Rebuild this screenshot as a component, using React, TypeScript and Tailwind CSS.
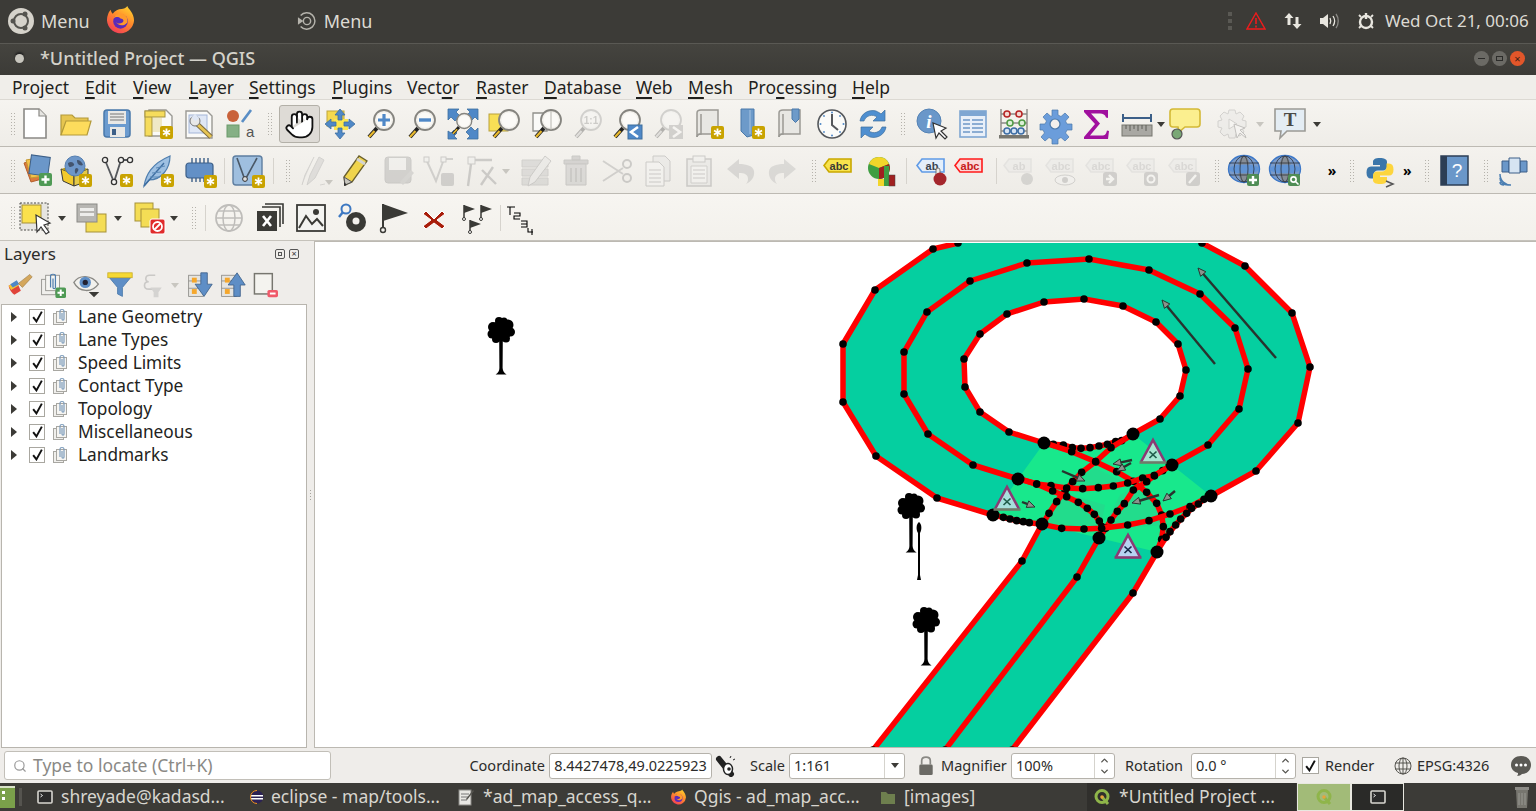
import type { ReactNode } from "react";
import { ChevronDown, ChevronUp, Hand, Search } from "lucide-react";

const FONT = "font-['Noto_Sans',sans-serif]";

function Ic({ children, off, className = "w-8 h-8" }: { children: ReactNode; off?: boolean; className?: string }) {
  return (
    <svg viewBox="0 0 32 32" className={`${className} overflow-visible ${off ? "opacity-30 grayscale" : ""}`}>
      {children}
    </svg>
  );
}

function Star({ x = 18, y = 18 }: { x?: number; y?: number }) {
  const c = 6.5;
  return (
    <g transform={`translate(${x} ${y})`}>
      <rect width="13" height="13" rx="2" fill="#c9a300" />
      <g stroke="#fff" strokeWidth="1.8">
        <line x1={c} y1="2.5" x2={c} y2="10.5" />
        <line x1="3" y1="4.5" x2="10" y2="8.5" />
        <line x1="3" y1="8.5" x2="10" y2="4.5" />
      </g>
    </g>
  );
}

function Mag({ x = 0, y = 0 }: { x?: number; y?: number }) {
  return (
    <g transform={`translate(${x} ${y})`}>
      <line x1="12" y1="20" x2="4" y2="29" stroke="#222" strokeWidth="4" />
      <line x1="9.5" y1="23" x2="4" y2="29" stroke="#e8b92e" strokeWidth="2.2" />
      <circle cx="19" cy="12" r="10" fill="#f3f1ec" stroke="#85847f" strokeWidth="1.8" />
      <circle cx="19" cy="12" r="7.5" fill="#fbfaf7" />
    </g>
  );
}

function Grip({ className = "" }: { className?: string }) {
  return (
    <div className={`grid w-[18px] shrink-0 justify-center ${className}`}>
      <div className="grid grid-cols-2 gap-x-[2px] gap-y-[2px]">
        {Array.from({ length: 16 }).map((_, i) => (
          <i key={i} className="h-px w-px bg-[#b5b2ab]" />
        ))}
      </div>
    </div>
  );
}

function Tool({ children, active, className = "" }: { children: ReactNode; active?: boolean; className?: string }) {
  return (
    <div
      className={`flex h-[38px] w-[41px] shrink-0 items-center justify-center rounded-[3px] ${
        active ? "border border-[#b3b0a8] bg-[#dedbd6]" : ""
      } ${className}`}
    >
      {children}
    </div>
  );
}

function Dd({ off, className = "" }: { off?: boolean; className?: string }) {
  return (
    <div className={`flex w-[9px] shrink-0 items-center justify-center ${className}`}>
      <div className={`h-0 w-0 border-x-[4.5px] border-t-[5px] border-x-transparent ${off ? "border-t-[#c8c6c0]" : "border-t-[#3c3b37]"}`} />
    </div>
  );
}

function Sep({ className = "" }: { className?: string }) {
  return <div className={`h-[26px] w-[3px] shrink-0 border-x border-x-transparent bg-[#d6d3cd] bg-clip-padding ${className}`} />;
}

function More({ className = "" }: { className?: string }) {
  return <div className={`shrink-0 text-center text-[14px] font-bold leading-none text-black ${className}`}>»</div>;
}

function Paper({ fill = "#e8e7e3" }: { fill?: string }) {
  return (
    <>
      <path d="M8 2h17v24H8c-3 0-4 1-4 3V5c0-2 2-3 4-3z" fill={fill} stroke="#9a9994" strokeWidth="1.5" />
      <path d="M4 29c0-2 1-3 4-3V6" fill="none" stroke="#9a9994" strokeWidth="1.5" />
    </>
  );
}

function Tag({ color = "#c8c6c0", fill = "#e6e4de", text = "abc", tc = "#a5a39d" }: { color?: string; fill?: string; text?: string; tc?: string }) {
  return (
    <>
      <path d="M6 4h22v13H6l-5-6.5z" fill={fill} stroke={color} strokeWidth="1.6" />
      <text x="16" y="15" textAnchor="middle" fontSize="11" fontWeight="700" fontFamily="Liberation Sans" fill={tc}>
        {text}
      </text>
    </>
  );
}

function Clip() {
  return (
    <svg viewBox="0 0 18 18" className="h-[18px] w-[18px] shrink-0">
      <rect x="1.5" y="5.5" width="10" height="11" fill="#f0efec" stroke="#a8a7a2" />
      <rect x="4.5" y="3.5" width="10" height="11" fill="#f6f5f2" stroke="#a8a7a2" />
      <path d="M8 11V3c0-2 4-2 4 0v8c0 1.5-2 1.5-2 0V5" fill="none" stroke="#7d9cbb" strokeWidth="1.2" />
    </svg>
  );
}

function Globe({ x = 16, y = 14 }: { x?: number; y?: number }) {
  return (
    <g transform={`translate(${x} ${y})`}>
      <ellipse rx="15.5" ry="13.5" fill="#7b9bc9" stroke="#3d78c8" strokeWidth="1.4" />
      <ellipse rx="6" ry="13" fill="#8a8a88" opacity=".8" />
      <ellipse rx="15" ry="4.5" fill="#5d93d8" opacity=".9" />
      <g fill="none" stroke="#23272e" strokeWidth=".9" opacity=".8">
        <ellipse rx="10" ry="13" />
        <ellipse rx="4" ry="13" />
        <line x1="-15" y1="-6" x2="15" y2="-6" />
        <line x1="-15" y1="6" x2="15" y2="6" />
      </g>
    </g>
  );
}

function Firefox({ size }: { size: string }) {
  return (
    <svg viewBox="0 0 32 32" className={`${size} shrink-0`}>
      <defs>
        <linearGradient id="ffg" x1="0.8" y1="0" x2="0.2" y2="1">
          <stop offset="0" stopColor="#ffd22e" />
          <stop offset=".45" stopColor="#ff8a2b" />
          <stop offset="1" stopColor="#f2385a" />
        </linearGradient>
      </defs>
      <path d="M23 1c1 3 7 7 7 15A14 14 0 1 1 3 10c1-3 2-4 3-5 0 2 1 3 2 4 2-3 6-5 9-5 2 0 5-1 6-3z" fill="url(#ffg)" />
      <circle cx="16" cy="17" r="7.5" fill="#5b2bb8" />
      <path d="M9 14c2-2 5-2 7 0 3 0 4 3 2 4-3 2-6 1-7-1 2 4 8 6 12 1 1-5-2-8-5-9-4-1-8 1-9 5z" fill="#ff9a2a" />
    </svg>
  );
}

function TermIcon({ className = "" }: { className?: string }) {
  return (
    <svg viewBox="0 0 16 16" className={`h-4 w-4 shrink-0 ${className}`}>
      <rect x="1" y="2" width="14" height="12" rx="1" fill="#2b2b2b" stroke="#d8d6d0" strokeWidth="1.6" />
      <path d="M3.5 5l2 1.5-2 1.5" fill="none" stroke="#e8e8e8" strokeWidth="1" />
    </svg>
  );
}

function QIcon({ size = "h-[18px] w-[18px]" }: { size?: string }) {
  return (
    <svg viewBox="0 0 18 18" className={`${size} shrink-0`}>
      <circle cx="9" cy="8.5" r="6" fill="none" stroke="#8fb54a" strokeWidth="3" />
      <path d="M9 9l6 7" stroke="#8fb54a" strokeWidth="3" />
      <circle cx="9" cy="9" r="1.8" fill="#e8a33a" />
    </svg>
  );
}

function Row1() {
  return (
    <div className="flex h-[47px] items-center border-b border-[#bdbab3] bg-gradient-to-b from-[#f6f4f0] to-[#efede8] pt-[2px]">
      <div className="w-[14.5px] shrink-0 pl-1">
        <Grip />
      </div>
      <Tool>
        <Ic>
          <path d="M5 1h15l7 7v22H5z" fill="#fff" stroke="#8a8985" strokeWidth="1.6" />
          <path d="M20 1v7h7" fill="#e6e5e1" stroke="#8a8985" strokeWidth="1.2" />
        </Ic>
      </Tool>
      <Tool>
        <Ic>
          <path d="M1 7h11l3 3h13v5H6L1 27z" fill="#e6c550" stroke="#b39a3a" strokeWidth="1.2" />
          <path d="M6 13h25l-4 14H1z" fill="#fddc5c" stroke="#b39a3a" strokeWidth="1.2" />
        </Ic>
      </Tool>
      <Tool>
        <Ic>
          <rect x="3" y="2" width="26" height="27" rx="3" fill="#6b9bcf" stroke="#4a79aa" strokeWidth="1.5" />
          <rect x="7" y="3" width="18" height="13" fill="#e8e8e6" />
          <path d="M9 6h14M9 9h14M9 12h14" stroke="#777" strokeWidth="1.2" />
          <rect x="9" y="19" width="15" height="10" fill="#e8e8e6" />
          <rect x="11" y="21" width="4" height="6" fill="#3c5f88" />
        </Ic>
      </Tool>
      <Tool>
        <Ic>
          <path d="M7 2h17l6 6v20H7z" fill="#fafaf8" stroke="#9a9994" strokeWidth="1.4" />
          <rect x="3" y="3" width="7" height="25" fill="#f6dc5c" stroke="#a59340" />
          <rect x="3" y="3" width="20" height="6" fill="#f6dc5c" stroke="#a59340" />
          <rect x="10" y="9" width="10" height="15" fill="#d9c56a" opacity=".35" />
          <Star x={18} y={18} />
        </Ic>
      </Tool>
      <Tool>
        <Ic>
          <path d="M3 3h21l5 5v22H3z" fill="#fafaf8" stroke="#9a9994" strokeWidth="1.4" />
          <rect x="6" y="7" width="18" height="18" fill="#dfe7f5" stroke="#a3b5d8" />
          <path d="M11 13l17 16" stroke="#7d6b3c" strokeWidth="5" />
          <path d="M13 15l15 14" stroke="#e6c452" strokeWidth="3" />
          <circle cx="12" cy="13" r="5" fill="#e8e8e6" stroke="#777" />
          <rect x="10" y="7" width="5" height="6" fill="#dfe7f5" transform="rotate(-45 12 10)" />
        </Ic>
      </Tool>
      <Tool>
        <Ic>
          <circle cx="9" cy="8" r="6" fill="#c9623a" />
          <line x1="18" y1="14" x2="27" y2="2" stroke="#5a8ec5" strokeWidth="2.6" />
          <rect x="3" y="17" width="12" height="12" fill="#85b085" stroke="#6b9a6b" />
          <text x="22" y="29" fontSize="15" fontFamily="Liberation Sans" fill="#555">a</text>
        </Ic>
      </Tool>
      <Grip />
      <Tool active>
        <Hand size={31} strokeWidth={1.4} fill="#fff" color="#111" />
      </Tool>
      <Tool>
        <Ic>
          <rect x="3" y="3" width="17" height="15" fill="#f5d94e" stroke="#bfa63a" />
          <rect x="10" y="11" width="14" height="11" fill="#fbe64f" />
          <g fill="#4f88c7" stroke="#3e6f9e" strokeWidth=".8">
            <path d="M16 1l5 6h-3v5h-4V7h-3z" />
            <path d="M16 31l5-6h-3v-5h-4v5h-3z" />
            <path d="M1 16l6-5v3h5v4H7v3z" />
            <path d="M31 16l-6-5v3h-5v4h5v3z" />
          </g>
        </Ic>
      </Tool>
      <Tool>
        <Ic>
          <Mag />
          <path d="M19 6v12M13 12h12" stroke="#4f88c7" strokeWidth="3.2" />
        </Ic>
      </Tool>
      <Tool>
        <Ic>
          <Mag />
          <path d="M13 12h12" stroke="#4f88c7" strokeWidth="3.4" />
        </Ic>
      </Tool>
      <Tool>
        <Ic>
          <g fill="#4f88c7" stroke="#3e6f9e" strokeWidth=".8">
            <path d="M1 1h11l-3 3 4 4-5 5-4-4-3 3z" />
            <path d="M31 1H20l3 3-4 4 5 5 4-4 3 3z" />
            <path d="M31 31H20l3-3-4-4 5-5 4 4 3-3z" />
            <path d="M1 31v-8l3 2 3-3 3 3-3 3 3 3z" />
          </g>
          <g transform="translate(3 4) scale(.75)">
            <Mag />
          </g>
        </Ic>
      </Tool>
      <Tool>
        <Ic>
          <rect x="1" y="6" width="19" height="17" fill="#f8df55" stroke="#b9a23c" />
          <Mag x={2} />
          <path d="M21 3a10 10 0 0 0 0 19 10 10 0 0 1 0-19z" fill="#efe7b9" opacity=".8" />
        </Ic>
      </Tool>
      <Tool>
        <Ic>
          <path d="M4 5h14v18H4z" fill="#fafaf8" stroke="#90908a" strokeWidth="1.3" />
          <Mag x={3} />
          <path d="M22 3v19" stroke="#b7b6b0" />
        </Ic>
      </Tool>
      <Tool>
        <Ic off>
          <Mag x={2} />
          <text x="21" y="16" textAnchor="middle" fontSize="10" fontWeight="700" fontFamily="Liberation Sans" fill="#777">1:1</text>
        </Ic>
      </Tool>
      <Tool>
        <Ic>
          <Mag />
          <rect x="17" y="17" width="14" height="14" fill="#4f88c7" stroke="#3e6f9e" />
          <path d="M27 19l-7 5 7 5" fill="none" stroke="#fff" strokeWidth="2.6" />
        </Ic>
      </Tool>
      <Tool>
        <Ic off>
          <Mag />
          <rect x="17" y="17" width="14" height="14" fill="#8a8a88" />
          <path d="M21 19l7 5-7 5" fill="none" stroke="#fff" strokeWidth="2.6" />
        </Ic>
      </Tool>
      <Tool>
        <Ic>
          <Paper />
          <Star x={18} y={18} />
        </Ic>
      </Tool>
      <Tool>
        <Ic>
          <path d="M7 1h13v26l-7 2-6-6z" fill="#6d9ac9" stroke="#4a79aa" />
          <path d="M16 2v24" stroke="#a8c4e2" />
          <Star x={18} y={18} />
        </Ic>
      </Tool>
      <Tool>
        <Ic>
          <Paper />
          <path d="M17 1h7v10l-3.5 3.5L17 11z" fill="#6d9ac9" stroke="#4a79aa" />
        </Ic>
      </Tool>
      <Tool>
        <Ic>
          <circle cx="16" cy="16" r="14" fill="#fbfbf9" stroke="#55585c" strokeWidth="1.6" />
          <path d="M16 6v11l6 5" fill="none" stroke="#55585c" strokeWidth="2" />
          <g fill="#4f88c7">
            <circle cx="16" cy="4.5" r="1" />
            <circle cx="16" cy="27.5" r="1" />
            <circle cx="4.5" cy="16" r="1" />
            <circle cx="27.5" cy="16" r="1" />
            <circle cx="8" cy="8" r=".9" />
            <circle cx="24" cy="8" r=".9" />
            <circle cx="8" cy="24" r=".9" />
            <circle cx="24" cy="24" r=".9" />
          </g>
        </Ic>
      </Tool>
      <Tool>
        <Ic>
          <path d="M3 13C4 6 11 1 19 3c2 1 4 2 5 3l4-4v11H16l4-4c-4-3-11-2-13 4z" fill="#4f8fd0" stroke="#3e6f9e" strokeWidth=".7" />
          <path d="M29 19c-1 7-8 12-16 10-2-1-4-2-5-3l-4 4V19h12l-4 4c4 3 11 2 13-4z" fill="#4f8fd0" stroke="#3e6f9e" strokeWidth=".7" />
        </Ic>
      </Tool>
      <Grip />
      <Tool>
        <Ic>
          <circle cx="13" cy="13" r="12" fill="#6a97c9" stroke="#5583b5" />
          <text x="13" y="20" textAnchor="middle" fontSize="19" fontWeight="700" fontStyle="italic" fontFamily="Liberation Serif" fill="#fff">i</text>
          <path d="M17 15l3 15 3-5 6 6 2-2-6-6 5-3z" fill="#fff" stroke="#333" strokeWidth="1.2" />
        </Ic>
      </Tool>
      <Tool>
        <Ic>
          <rect x="3" y="3" width="26" height="26" fill="#e8eff8" stroke="#7ea6d2" strokeWidth="1.6" />
          <rect x="3" y="3" width="26" height="5" fill="#7ea6d2" />
          <path d="M6 12h7M6 16h7M6 20h7M6 24h7M15 12h11M15 16h11M15 20h11M15 24h11" stroke="#6e98c6" strokeWidth="1.6" />
        </Ic>
      </Tool>
      <Tool>
        <Ic>
          <path d="M3 1v27M29 1v27M3 6h26M3 15h26M3 23h26" stroke="#8a8985" strokeWidth="1.4" />
          <rect x="1" y="27" width="30" height="3.5" fill="#77766f" />
          <circle cx="9" cy="6" r="3" fill="#f3d8d2" stroke="#b62323" strokeWidth="1.5" />
          <circle cx="21" cy="6" r="3" fill="#f3d8d2" stroke="#b62323" strokeWidth="1.5" />
          <circle cx="12" cy="15" r="3" fill="#dcefd8" stroke="#4f9a45" strokeWidth="1.5" />
          <circle cx="24" cy="15" r="3" fill="#dcefd8" stroke="#4f9a45" strokeWidth="1.5" />
          <circle cx="9" cy="23" r="3" fill="#d5e3f3" stroke="#3c6da5" strokeWidth="1.5" />
          <circle cx="16" cy="23" r="3" fill="#d5e3f3" stroke="#3c6da5" strokeWidth="1.5" />
          <circle cx="23" cy="23" r="3" fill="#d5e3f3" stroke="#3c6da5" strokeWidth="1.5" />
        </Ic>
      </Tool>
      <Tool>
        <Ic>
          <path d="M13 2h6v5l3 1.500 4-3.500 4 4-3.500 4 1.500 3h5v6h-5l-1.500 3 3.500 4-4 4-4-3.500-3 1.500v5h-6v-5l-3-1.500-4 3.500-4-4 3.500-4-1.500-3H1v-6h5l1.500-3L4 9l4-4 4 3.500 1-.5z" fill="#6b9ddb" stroke="#4a79aa" strokeWidth=".7" />
          <circle cx="16" cy="16" r="5" fill="#f2f0ec" stroke="#4a79aa" strokeWidth="1.2" />
        </Ic>
      </Tool>
      <Tool>
        <svg viewBox="0 0 32 32" className="h-8 w-8">
          <path d="M4 2h24v8l-2-.5c-1-3-3-4-6-4H11l9 10-10 12h12c3 0 4-1 5-5l2 .5-1 8H4v-2l11-13L4 4z" fill="#a0109e" />
        </svg>
      </Tool>
      <Tool>
        <Ic>
          <path d="M2 10h28M2 6v8M30 6v8" stroke="#3c5f88" strokeWidth="2" />
          <rect x="1" y="17" width="30" height="11" fill="#a9a8a3" stroke="#77766f" />
          <path d="M5 17v4M9 17v6M13 17v4M17 17v6M21 17v4M25 17v6" stroke="#5f5e59" />
        </Ic>
      </Tool>
      <Dd className="ml-[-1px] mr-[-1px]" />
      <Tool>
        <Ic>
          <path d="M4 1h24c2 0 3 1 3 3v12c0 2-1 3-3 3H16l-6 5-1-5H4c-2 0-3-1-3-3V4c0-2 1-3 3-3z" fill="#fbef8f" stroke="#d4b936" strokeWidth="1.6" />
          <circle cx="8" cy="26" r="5" fill="#7aa876" stroke="#555" strokeWidth="1.2" />
        </Ic>
      </Tool>
      <Tool className="ml-[6px]">
        <Ic off>
          <path d="M13 2h6l1 4 4-2 4 4-2 4 4 1v6l-4 1 2 4-4 4-4-2-1 4h-6l-1-4-4 2-4-4 2-4-4-1v-6l4-1-2-4 4-4 4 2z" fill="#e5e3de" stroke="#888" />
          <path d="M13 11l8 5-8 5z" fill="#fff" stroke="#888" />
          <path d="M18 16l3 14 3-5 6 5-1-3-5-5 5-2z" fill="#fff" stroke="#555" />
        </Ic>
      </Tool>
      <Dd off className="ml-[3px]" />
      <Tool className="ml-[5px]">
        <Ic>
          <path d="M1 1h30v22H13l-7 7 1-7H1z" fill="#e4edf4" stroke="#9b9a95" strokeWidth="1.6" />
          <text x="16" y="18" textAnchor="middle" fontSize="19" fontWeight="700" fontFamily="Liberation Serif" fill="#4a4a46">T</text>
        </Ic>
      </Tool>
      <Dd className="ml-[2px]" />
    </div>
  );
}

function Row2() {
  return (
    <div className="flex h-[47px] items-center overflow-hidden border-b border-[#bdbab3] bg-gradient-to-b from-[#f4f2ee] to-[#eeece7] pt-[2px]">
      <div className="w-[15.5px] shrink-0 pl-1">
        <Grip />
      </div>
      <Tool>
        <Ic>
          <path d="M4 8l11-3 7 19-11 3z" fill="#db7a3e" stroke="#b45f2c" />
          <path d="M6 5l12-2 5 18-12 2z" fill="#f3c24c" stroke="#c59a32" />
          <rect x="10" y="1" width="19" height="19" fill="#6b97c9" stroke="#3c5f88" transform="rotate(8 19 11)" />
          <rect x="19" y="18" width="13" height="13" rx="2" fill="#4f9a55" />
          <path d="M25.5 20.5v8M21.5 24.5h8" stroke="#fff" strokeWidth="2.4" />
        </Ic>
      </Tool>
      <Tool className="ml-[-1px]">
        <Ic>
          <path d="M1 14l13 5v12L3 26z" fill="#f2ca2d" stroke="#3a3a36" />
          <path d="M14 19l14-5v12L14 31z" fill="#e4c948" stroke="#3a3a36" />
          <path d="M1 14l13-4 14 4-14 5z" fill="#b29820" />
          <circle cx="15" cy="11" r="10" fill="#6d96c8" stroke="#557fb0" />
          <path d="M8 8c3-2 5-1 6 1s-3 3-4 3-2-2-2-4zM17 5c3 0 5 2 6 5-2 1-4 0-5-1s-1-3-1-4zM16 13c2 0 3 1 2 3l-2 3c-1-1-2-4 0-6z" fill="#43546e" />
          <Star x={19} y={19} />
        </Ic>
      </Tool>
      <Tool>
        <Ic>
          <path d="M4 5l9 22 7-22h9" fill="none" stroke="#55585c" strokeWidth="1.8" />
          <g fill="#f6f5f2" stroke="#333" strokeWidth="1.3">
            <circle cx="4" cy="5" r="2.6" />
            <circle cx="13" cy="27" r="2.6" />
            <circle cx="20" cy="5" r="2.6" />
            <circle cx="29" cy="5" r="2.6" />
          </g>
          <Star x={19} y={19} />
        </Ic>
      </Tool>
      <Tool>
        <Ic>
          <path d="M2 31c2-11 7-22 26-30 0 12-8 24-21 24z" fill="#9ec0e2" stroke="#4f7eae" strokeWidth="1.2" />
          <path d="M2 31L22 8" stroke="#3d6da0" strokeWidth="1.4" />
          <path d="M10 18l9-1M8 22l10 0M14 13l9-2" stroke="#5b89b7" />
          <Star x={19} y={19} />
        </Ic>
      </Tool>
      <Tool className="ml-[1px]">
        <Ic>
          <path d="M8 3v5M12 3v5M16 3v5M20 3v5M24 3v5M8 22v5M12 22v5M16 22v5M20 22v5M24 22v5" stroke="#3c5f88" strokeWidth="1.4" />
          <rect x="2" y="8" width="27" height="15" rx="3" fill="#6390c6" stroke="#3c5f88" strokeWidth="1.2" />
          <Star x={20} y={20} />
        </Ic>
      </Tool>
      <Sep className="ml-[2px]" />
      <Tool className="ml-[2px]">
        <Ic>
          <rect x="1" y="1" width="29" height="29" rx="3" fill="#9fbfdf" stroke="#5e7ea0" strokeWidth="1.4" />
          <path d="M5 3l8 22 12-22" fill="none" stroke="#4a5866" strokeWidth="1.6" />
          <circle cx="13" cy="24" r="2.4" fill="#ddd" stroke="#333" />
          <Star x={20} y={20} />
        </Ic>
      </Tool>
      <Sep className="ml-[3px]" />
      <Grip className="ml-[4.5px]" />
      <Tool className="ml-[-1.5px]">
        <Ic off>
          <path d="M7 30l3-10 9-18 5 3-9 18zM2 30l3-10 9-18" fill="#b9b7b1" stroke="#8e8c86" />
          <path d="M20 30l5-1" stroke="#999" />
        </Ic>
      </Tool>
      <Dd off className="ml-[-12.5px] mr-[3.5px] mt-[22px]" />
      <Tool className="ml-[-1px]">
        <Ic>
          <path d="M5 30l-1-8L19 1l8 5-15 21z" fill="#f0d44c" stroke="#6a5f2c" strokeWidth="1.3" />
          <path d="M17 4l8 5" stroke="#d4d4d0" strokeWidth="3" />
          <path d="M5 30l-1-8 8 5z" fill="#c8c6be" stroke="#555" />
          <path d="M4 31l0-4 3 3z" fill="#333" />
        </Ic>
      </Tool>
      <Tool className="ml-[1px]">
        <Ic off>
          <rect x="3" y="2" width="26" height="26" rx="3" fill="#8e8e8a" stroke="#777" />
          <rect x="7" y="3" width="17" height="12" fill="#eee" />
          <path d="M18 27l11-12 3 3-11 12z" fill="#b09a70" />
        </Ic>
      </Tool>
      <Tool>
        <Ic off>
          <path d="M3 4l10 22 8-22h9" fill="none" stroke="#888" strokeWidth="2" />
          <rect x="1" y="2" width="5" height="5" fill="#eee" stroke="#777" />
          <rect x="18" y="2" width="5" height="5" fill="#eee" stroke="#777" />
          <rect x="18" y="18" width="13" height="13" rx="2" fill="#888" />
        </Ic>
      </Tool>
      <Tool className="ml-[1px]">
        <Ic off>
          <rect x="3" y="2" width="7" height="7" fill="#eee" stroke="#777" />
          <path d="M10 5h17M6 9l-3 22M17 15l14 14M28 12L16 30" stroke="#777" strokeWidth="2.4" />
        </Ic>
      </Tool>
      <Dd off />
      <Tool className="ml-[5px]">
        <Ic off>
          <path d="M2 5h26v7H2zM2 14h26v7H2zM2 23h26v7H2z" fill="#b4b09f" stroke="#8c897b" />
          <path d="M8 31l2-9L25 1l6 5-16 21z" fill="#ddd" stroke="#777" />
        </Ic>
      </Tool>
      <Tool className="ml-[-1px]">
        <Ic off>
          <path d="M4 5h24v4H4zM12 1h8v4h-8z" fill="#aa8f8a" stroke="#7f6d68" />
          <path d="M6 9h20v21H6z" fill="#bda5a0" stroke="#7f6d68" />
          <path d="M11 13v14M16 13v14M21 13v14" stroke="#8a7470" strokeWidth="2" />
        </Ic>
      </Tool>
      <Tool className="ml-[1px]">
        <Ic off>
          <circle cx="25" cy="9" r="4" fill="none" stroke="#777" strokeWidth="2" />
          <circle cx="25" cy="23" r="4" fill="none" stroke="#777" strokeWidth="2" />
          <path d="M1 6l20 13M1 26l20-13" stroke="#888" strokeWidth="2" />
        </Ic>
      </Tool>
      <Tool className="ml-[-1px]">
        <Ic off>
          <path d="M11 1h12l5 5v20H11z" fill="#ddd" stroke="#777" />
          <path d="M4 7h13l5 5v19H4z" fill="#f6f6f3" stroke="#777" />
          <path d="M7 15h12M7 19h12M7 23h12M7 27h12" stroke="#777" />
        </Ic>
      </Tool>
      <Tool>
        <Ic off>
          <rect x="4" y="4" width="24" height="27" fill="#ddd" stroke="#777" strokeWidth="1.5" />
          <rect x="10" y="1" width="12" height="6" fill="#eee" stroke="#777" />
          <path d="M8 11h16v17H8z" fill="#f6f6f3" stroke="#888" />
          <path d="M10 15h12M10 19h12M10 23h12" stroke="#777" />
        </Ic>
      </Tool>
      <Tool className="ml-[1px]">
        <Ic off>
          <path d="M14 4L2 14l12 10v-6c5 0 9 1 9 6 0 2-1 4-2 5 5-2 9-7 8-13-1-5-7-7-15-7z" fill="#b59b96" />
        </Ic>
      </Tool>
      <Tool>
        <Ic off>
          <path d="M18 4l12 10-12 10v-6c-5 0-9 1-9 6 0 2 1 4 2 5-5-2-9-7-8-13 1-5 7-7 15-7z" fill="#a9a8a3" />
        </Ic>
      </Tool>
      <Grip className="ml-[2.5px]" />
      <Tool className="ml-[-4.5px]">
        <Ic>
          <Tag color="#c9a800" fill="#f8e34c" tc="#3a3a36" />
        </Ic>
      </Tool>
      <Tool className="ml-[2px]">
        <Ic>
          <circle cx="13" cy="13" r="11" fill="#3f9e42" />
          <path d="M13 2a11 11 0 0 1 10 7l-10 4-10-4a11 11 0 0 1 10-7z" fill="#f2d52a" />
          <path d="M13 13l10-4a11 11 0 0 1-10 15z" fill="#a02020" />
          <rect x="12" y="24" width="6" height="7" fill="#f2d52a" />
          <rect x="18" y="11" width="5" height="20" fill="#3f9e42" />
          <rect x="23" y="20" width="6" height="11" fill="#a02020" stroke="#444" strokeWidth=".5" />
        </Ic>
      </Tool>
      <Sep className="ml-[2px]" />
      <Tool className="ml-[4px]">
        <Ic>
          <Tag color="#5f9ae6" fill="#e4effb" text="ab" tc="#3a4450" />
          <rect x="20" y="13" width="4" height="9" rx="2" fill="#ececea" stroke="#777" />
          <circle cx="24" cy="24" r="6.5" fill="#a4262c" />
        </Ic>
      </Tool>
      <Tool className="ml-[-3px]">
        <Ic>
          <Tag color="#ff1a1a" fill="#fbd9d9" tc="#c81818" />
        </Ic>
      </Tool>
      <Sep className="ml-[4px]" />
      <Tool className="ml-[1px]">
        <Ic off>
          <Tag text="ab" />
          <circle cx="24" cy="24" r="6" fill="#999" />
        </Ic>
      </Tool>
      <Tool className="ml-[1px]">
        <Ic off>
          <Tag />
          <ellipse cx="20" cy="25" rx="10" ry="5" fill="#f4f4f0" stroke="#888" />
          <circle cx="20" cy="25" r="3" fill="#888" />
        </Ic>
      </Tool>
      <Tool className="ml-[-1px]">
        <Ic off>
          <Tag />
          <rect x="18" y="17" width="14" height="14" rx="3" fill="#888" />
          <path d="M21 24h6M24 20l4 4-4 4" stroke="#fff" strokeWidth="2.4" fill="none" />
        </Ic>
      </Tool>
      <Tool>
        <Ic off>
          <Tag />
          <rect x="18" y="17" width="14" height="14" rx="3" fill="#888" />
          <circle cx="25" cy="24" r="3.5" stroke="#fff" strokeWidth="2" fill="none" />
        </Ic>
      </Tool>
      <Tool className="ml-[1px]">
        <Ic off>
          <Tag />
          <rect x="18" y="17" width="14" height="14" rx="3" fill="#888" />
          <path d="M21 28l7-8" stroke="#fff" strokeWidth="2.4" />
        </Ic>
      </Tool>
      <Grip className="ml-[3.5px]" />
      <Tool className="ml-[-2.5px]">
        <Ic>
          <Globe />
          <rect x="19" y="19" width="12" height="12" rx="2" fill="#4f8d55" />
          <path d="M25 21v8M21 25h8" stroke="#fff" strokeWidth="2.4" />
        </Ic>
      </Tool>
      <Tool>
        <Ic>
          <Globe />
          <rect x="19" y="19" width="12" height="12" rx="2" fill="#4f8d55" />
          <circle cx="24.5" cy="24.5" r="2.6" fill="none" stroke="#fff" strokeWidth="1.6" />
          <path d="M26.5 26.5l3 3" stroke="#fff" strokeWidth="1.6" />
        </Ic>
      </Tool>
      <More className="ml-[19.5px] w-[14px]" />
      <Grip className="ml-[4px]" />
      <Tool className="ml-[-1.5px]">
        <Ic>
          <path d="M16 3c-5 0-7 1.5-7 4v3h7v1.500H7c-3 0-4.500 2-4.500 6s1.500 6 4.500 6h2.500v-3.500c0-2.500 2-4.500 4.500-4.500h5c2.500 0 4-2 4-4V7c0-3-3-4-7-4z" fill="#3b76aa" />
          <path d="M16 29c5 0 7-1.500 7-4v-3h-7v-1.500h9c3 0 4.500-2 4.500-6s-1.500-6-4.500-6h-2.500V12c0 2.500-2 4.500-4.500 4.500h-5c-2.500 0-4 2-4 4V25c0 3 3 4 7 4z" fill="#fdd53d" />
          <path d="M22 26l7 3-7 3" fill="none" stroke="#555" strokeWidth="1.5" />
        </Ic>
      </Tool>
      <More className="ml-[2.5px] w-[8px]" />
      <Grip className="ml-[7px]" />
      <Tool className="ml-[-2.5px]">
        <Ic>
          <rect x="3" y="1" width="27" height="29" fill="#6a97c9" stroke="#2c3e55" strokeWidth="1.5" />
          <rect x="3" y="1" width="6" height="29" fill="#2c3e55" />
          <text x="19" y="22" textAnchor="middle" fontSize="19" fontFamily="Liberation Sans" fill="#fff">?</text>
        </Ic>
      </Tool>
      <Grip className="ml-[2.5px]" />
      <Tool className="ml-[-1.5px]">
        <Ic>
          <path d="M4 6h7v11H4zM22 6h7v11h-7z" fill="#6a97c9" stroke="#3c5f88" />
          <path d="M11 3h11v15H11z" fill="#d6e4f2" stroke="#3c5f88" />
          <path d="M2 19c0 7 5 11 11 11M2 23c0 4 3 7 8 7M2 27c0 2 1 3 4 3" fill="none" stroke="#4a7eb2" strokeWidth="1.5" />
        </Ic>
      </Tool>
    </div>
  );
}

function Row3() {
  return (
    <div className="flex h-[47px] items-center border-b border-[#c5c2bb] bg-gradient-to-b from-[#f7f5f1] to-[#f3f1ec] pt-[2px]">
      <div className="w-[14.5px] shrink-0 pl-1">
        <Grip />
      </div>
      <Tool>
        <Ic>
          <rect x="1" y="1" width="28" height="27" fill="#e6e5e1" stroke="#4a4a46" strokeDasharray="2 1.5" />
          <rect x="3" y="3" width="19" height="18" fill="#fbe14c" stroke="#a5913a" />
          <path d="M17 13l1 17 4-5 5 7 3-2-5-7 6-2z" fill="#fff" stroke="#333" strokeWidth="1.2" />
        </Ic>
      </Tool>
      <Dd className="ml-[2px]" />
      <Tool className="ml-[4px]">
        <Ic>
          <rect x="11" y="12" width="20" height="18" fill="#f4dd55" stroke="#a5913a" />
          <rect x="2" y="2" width="20" height="18" fill="#b7b6b2" stroke="#8a8985" />
          <rect x="5" y="6" width="14" height="3" fill="#ededeb" />
          <rect x="5" y="11" width="14" height="3" fill="#ededeb" />
        </Ic>
      </Tool>
      <Dd className="ml-[2px]" />
      <Tool className="ml-[6px]">
        <Ic>
          <rect x="2" y="1" width="18" height="18" fill="#f4dd55" stroke="#a5913a" />
          <rect x="8" y="7" width="18" height="18" fill="#f4dd55" stroke="#a5913a" />
          <rect x="17" y="17" width="15" height="15" rx="2" fill="#e02b2b" stroke="#fff" />
          <circle cx="24.5" cy="24.5" r="4.5" fill="none" stroke="#fff" strokeWidth="1.8" />
          <path d="M21.5 27.5l6-6" stroke="#fff" strokeWidth="1.8" />
        </Ic>
      </Tool>
      <Dd />
      <Grip className="ml-[6.5px]" />
      <Sep className="ml-[0.5px]" />
      <Tool className="ml-[2px]">
        <Ic off>
          <circle cx="16" cy="16" r="13" fill="none" stroke="#444" strokeWidth="1.8" />
          <ellipse cx="16" cy="16" rx="6" ry="13" fill="none" stroke="#444" strokeWidth="1.5" />
          <path d="M3 16h26M5 9h22M5 23h22" stroke="#444" strokeWidth="1.5" />
        </Ic>
      </Tool>
      <Tool>
        <Ic>
          <path d="M11 2h18v20" fill="none" stroke="#3a3a36" strokeWidth="1.6" />
          <path d="M8 5h18v20" fill="none" stroke="#3a3a36" strokeWidth="1.6" />
          <rect x="3" y="9" width="20" height="20" fill="#3a3a36" />
          <path d="M9 14l8 10M17 14L9 24" stroke="#fff" strokeWidth="2.6" />
        </Ic>
      </Tool>
      <Tool>
        <Ic>
          <rect x="2" y="3" width="28" height="26" fill="#f4f4f1" stroke="#3a3a36" strokeWidth="1.8" />
          <path d="M4 26l7-12 6 8 5-5 6 7" fill="none" stroke="#3a3a36" strokeWidth="2" />
          <circle cx="21" cy="10" r="3" fill="#3a3a36" />
        </Ic>
      </Tool>
      <Tool>
        <Ic>
          <circle cx="20" cy="20" r="10" fill="#3a3a36" />
          <circle cx="20" cy="19" r="3.5" fill="#f2f0ec" />
          <circle cx="10" cy="7" r="4.5" fill="none" stroke="#3d78c2" strokeWidth="2" />
          <path d="M7 10l-4 5" stroke="#3d78c2" strokeWidth="2.4" />
        </Ic>
      </Tool>
      <Tool>
        <Ic>
          <path d="M6 2v26" stroke="#3a3a36" strokeWidth="2" />
          <path d="M6 2l25 9-25 8z" fill="#3a3a36" />
          <circle cx="6" cy="28" r="2.5" fill="#f4f2ee" stroke="#3a3a36" strokeWidth="1.4" />
        </Ic>
      </Tool>
      <Tool>
        <Ic>
          <path d="M7 8l8-8 3 3-8 6 8 6-3 3-8-6-8 6-3-3 8-6-8-6 3-3z" transform="translate(9 9)" fill="#a81d0a" stroke="#fff" strokeWidth="1" />
        </Ic>
      </Tool>
      <Tool>
        <Ic>
          <path d="M5 3v14M22 3v14M11 18v12" stroke="#3a3a36" strokeWidth="1.5" />
          <path d="M5 3l11 4-11 4zM22 3l11 4-11 4zM11 18l11 4-11 4z" fill="#3a3a36" />
          <circle cx="5" cy="17" r="1.5" fill="#fff" stroke="#3a3a36" />
          <circle cx="22" cy="17" r="1.5" fill="#fff" stroke="#3a3a36" />
          <circle cx="11" cy="30" r="1.5" fill="#fff" stroke="#3a3a36" />
        </Ic>
      </Tool>
      <Sep className="ml-[3px]" />
      <Tool className="ml-[-2px]">
        <svg viewBox="0 0 32 32" className="h-8 w-8 overflow-visible" fill="none" stroke="#000" strokeWidth="1.1">
          <path d="M3 5h3v8M6 5h5" />
          <path d="M10 11h6v3h-6v3h6" />
          <path d="M17 19h6v3h-6M23 22v3h-6" />
          <path d="M24 26v4h5M28 27v6" />
        </svg>
      </Tool>
    </div>
  );
}

const LAYERS = ["Lane Geometry", "Lane Types", "Speed Limits", "Contact Type", "Topology", "Miscellaneous", "Landmarks"];

function LayersPanel() {
  return (
    <aside className="flex w-[307px] shrink-0 flex-col bg-[#efedea]">
      <div className="flex h-[25px] items-center pl-1 pr-2">
        <span className="flex-1 text-[17px] leading-none text-[#2c2c2a]">Layers</span>
        <div className="flex gap-[4px]">
          <span className="relative flex h-[10px] w-[10px] items-center justify-center rounded-[2px] border border-[#555]">
            <i className="h-[4px] w-[4px] border border-[#555]" />
          </span>
          <span className="flex h-[10px] w-[10px] items-center justify-center rounded-[2px] border border-[#555] text-[9px] leading-none text-[#333]">×</span>
        </div>
      </div>
      <div className="flex h-[38px] items-center pl-[3px]">
        <div className="flex w-[33px] justify-center">
          <Ic className="h-[26px] w-[26px]">
            <path d="M2 17l10-5 5 11-8 5c-3-2-6-6-7-11z" fill="#e0443a" />
            <path d="M2 17l10-5 2 5-9 5z" fill="#f2c434" />
            <path d="M4 15l8-5 3 5-8 4z" fill="#4f88c7" />
            <path d="M14 14l14-11 3 3-12 13z" fill="#d4a75c" stroke="#8a6a34" strokeWidth=".6" />
          </Ic>
        </div>
        <div className="flex w-[34px] justify-center">
          <Ic className="h-[26px] w-[26px]">
            <rect x="2" y="9" width="17" height="19" fill="#f0efec" stroke="#8a8985" />
            <rect x="7" y="4" width="17" height="19" fill="#f6f5f2" stroke="#8a8985" />
            <path d="M13 19V5c0-3 6-3 6 0v14c0 2-3 2-3 0V8" fill="none" stroke="#4f7eae" strokeWidth="1.5" />
            <rect x="19" y="19" width="13" height="13" rx="2" fill="#4f9a55" />
            <path d="M25.5 21.5v8M21.5 25.5h8" stroke="#fff" strokeWidth="2.4" />
          </Ic>
        </div>
        <div className="flex w-[34px] justify-center">
          <Ic className="h-[28px] w-[28px]">
            <path d="M1 13c6-9 20-9 28 2-7 10-22 10-28-2z" fill="#f2f1ed" stroke="#8a8985" strokeWidth="1.5" />
            <circle cx="14" cy="13" r="6.5" fill="#5e8ec6" />
            <circle cx="14" cy="13" r="3" fill="#223" />
            <path d="M18 24h12l-6 6z" fill="#3a3a36" />
          </Ic>
        </div>
        <div className="flex w-[32px] justify-center">
          <Ic className="h-[26px] w-[26px]">
            <path d="M3 7h26L19 19v11l-6-3v-8z" fill="#5e8ec6" stroke="#4a79aa" />
            <rect x="1" y="1" width="30" height="6" fill="#f5d934" stroke="#c9ad28" />
          </Ic>
        </div>
        <div className="flex w-[30px] justify-center pl-[2px]">
          <Ic className="h-[26px] w-[26px]" off>
            <path d="M20 4h-7c-6 0-6 8-1 8-7 0-7 9 0 9h7" fill="none" stroke="#777" strokeWidth="2" />
            <path d="M14 19h14l-4 6v6h-6v-6z" fill="#999" />
          </Ic>
        </div>
        <Dd off className="mx-[4px]" />
        <div className="flex w-[34px] justify-center">
          <Ic className="h-[26px] w-[26px]">
            <rect x="2" y="4" width="18" height="26" fill="#e6e5e1" stroke="#8a8985" />
            <path d="M2 11h18M2 20h18" stroke="#8a8985" />
            <rect x="6" y="7" width="6" height="6" fill="#f5a72c" />
            <rect x="6" y="21" width="6" height="6" fill="#f5a72c" />
            <path d="M17 1h8v14h6L21 30 10 15h7z" fill="#5e8ec6" stroke="#3c5f88" />
          </Ic>
        </div>
        <div className="flex w-[32px] justify-center">
          <Ic className="h-[26px] w-[26px]">
            <rect x="2" y="4" width="18" height="26" fill="#e6e5e1" stroke="#8a8985" />
            <path d="M2 11h18M2 20h18" stroke="#8a8985" />
            <rect x="6" y="7" width="6" height="6" fill="#f5a72c" />
            <rect x="6" y="21" width="6" height="6" fill="#f5a72c" />
            <path d="M17 30h8V16h6L21 1 10 16h7z" fill="#5e8ec6" stroke="#3c5f88" />
          </Ic>
        </div>
        <div className="flex w-[32px] justify-center">
          <Ic className="h-[26px] w-[26px]">
            <rect x="3" y="2" width="22" height="25" fill="#f4f3ef" stroke="#77766f" strokeWidth="1.8" />
            <rect x="19" y="22" width="13" height="9" rx="2" fill="#f05a6a" />
            <path d="M22 26.5h7" stroke="#fff" strokeWidth="2.4" />
          </Ic>
        </div>
      </div>
      <div className="ml-[1px] flex-1 border border-[#b8b5ae] bg-white">
        {LAYERS.map((l) => (
          <div key={l} className="flex h-[23px] items-center pl-[9px] text-[17.25px] leading-none text-[#232321]">
            <i className="mr-[12px] h-0 w-0 border-y-[5px] border-l-[6px] border-y-transparent border-l-[#3c3b37]" />
            <span className="mr-[7px] flex h-[16px] w-[16px] shrink-0 items-center justify-center border border-[#a9a7a0] bg-white">
              <svg viewBox="0 0 12 12" className="h-[13px] w-[13px]">
                <path d="M2 6.5l3 4 5-9" fill="none" stroke="#111" strokeWidth="1.8" />
              </svg>
            </span>
            <Clip />
            <span className="ml-[8px]">{l}</span>
          </div>
        ))}
      </div>
    </aside>
  );
}

const Y_OUTER_L = "958,243 933,249 875,290 843,344 843,402 876,456 937,498 993,515";
const Y_OUTER_R = "1202,243 1245,266 1292,313 1310,367 1298,423 1256,471 1211,496";
const MID_R = "1018,479 973,465 928,434 904,394 904,352 927,312 970,281 1027,263 1089,259 1149,270 1200,294 1235,328 1248,369 1239,409 1208,445 1172,465";
const IN_R = "1044,443 1009,432 980,412 965,387 964,359 980,334 1007,314 1044,302 1084,299 1123,306 1156,322 1178,344 1186,370 1180,396 1160,419 1133,434";

function pts(s: string) {
  return s.split(" ").map((p) => p.split(",").map(Number) as [number, number]);
}

// intersection paths, coordinates read from the zoomed crop (offset 960,410 at 3x)
const z = (a: number[][]) => a.map(([x, y]) => [960 + x / 3, 410 + y / 3] as [number, number]);
const LANES = [
  z([[252, 98], [280, 103], [310, 105], [337, 113], [363, 115], [390, 113], [417, 108], [442, 103], [467, 95], [485, 92], [518, 73]]),
  z([[252, 98], [335, 125], [407, 155], [470, 185], [520, 214], [560, 247], [590, 280], [605, 315], [610, 350], [605, 388], [590, 426]]),
  z([[518, 73], [453, 113], [407, 155], [365, 187], [338, 215], [315, 243], [290, 275], [267, 310], [247, 343]]),
  z([[175, 206], [230, 222], [273, 227], [320, 234], [368, 236], [415, 233], [460, 228], [503, 219], [548, 204], [583, 197], [608, 182], [635, 165]]),
  z([[175, 206], [230, 222], [278, 243], [320, 260], [355, 277], [382, 295], [403, 313], [418, 333], [425, 350], [418, 384]]),
  z([[635, 165], [583, 197], [560, 215], [520, 240], [493, 281], [472, 304], [453, 330], [437, 355], [418, 384]]),
  z([[98, 315], [130, 322], [150, 327], [170, 332], [190, 335], [208, 338], [247, 343]]),
  z([[247, 343], [305, 355], [372, 357], [425, 355], [503, 345], [567, 332], [630, 312], [690, 290], [752, 257]]),
  z([[752, 257], [732, 268], [715, 282], [695, 295], [680, 310], [662, 327], [647, 345], [630, 365], [618, 382], [590, 426]]),
];

const BIG = [[1044, 443], [1133, 434], [1172, 465], [1211, 496], [1157, 552], [1099, 538], [1042, 524], [993, 515], [1018, 479]];

function Line({ p }: { p: [number, number][] }) {
  return (
    <>
      <polyline points={p.map((q) => q.join(",")).join(" ")} fill="none" stroke="#ff0000" strokeWidth="5.5" strokeLinejoin="round" />
      {p.map(([x, y], i) => (
        <circle key={i} cx={x} cy={y} r="3.8" fill="#000" />
      ))}
    </>
  );
}

function Arrow({ a, b }: { a: [number, number]; b: [number, number] }) {
  const d = Math.atan2(b[1] - a[1], b[0] - a[0]);
  const back = (s: number, o: number) => `${b[0] - s * Math.cos(d) + o * Math.sin(d)},${b[1] - s * Math.sin(d) - o * Math.cos(d)}`;
  return (
    <>
      <line x1={a[0]} y1={a[1]} x2={b[0] - 7 * Math.cos(d)} y2={b[1] - 7 * Math.sin(d)} stroke="#28332e" strokeWidth="2.4" />
      <polygon points={`${b[0]},${b[1]} ${back(8, 3.5)} ${back(8, -3.5)}`} fill="#8b938d" stroke="#28332e" strokeWidth="1" />
    </>
  );
}

function Sign({ x, y, fill, base, mark }: { x: number; y: number; fill: string; base: string; mark: string }) {
  return (
    <g transform={`translate(${x} ${y})`}>
      <polygon points="0,2 12,24 -12,24" fill={fill} />
      <path d="M-12 24L0 2l12 22" fill="none" stroke="#8b3a74" strokeWidth="2.6" />
      <path d="M-13.5 24.5h27" stroke={base} strokeWidth="2.6" />
      <path d="M-3.5 13.5l7 6.5M3.5 13.5l-7 6.5" stroke={mark} strokeWidth="1.7" />
    </g>
  );
}

function Tree({ x, y, h }: { x: number; y: number; h: number }) {
  return (
    <g transform={`translate(${x} ${y})`} fill="#000">
      <circle cx="0" cy="0" r="10.500" />
      <circle cx="-8" cy="-4" r="5" />
      <circle cx="7" cy="-6" r="5.500" />
      <circle cx="9.500" cy="1" r="4.500" />
      <circle cx="-9" cy="3" r="4.500" />
      <circle cx="-2" cy="-10" r="4" />
      <circle cx="3" cy="-10" r="3.500" />
      <circle cx="-5" cy="8" r="4" />
      <circle cx="5" cy="7.500" r="4" />
      <path d={`M-1.8 9h3.600l-.2 ${h - 15}c.2 3 1.500 5 4 6.500h-11c2.500-1.500 3.800-3.500 3.800-6.500z`} />
    </g>
  );
}

function MapCanvas() {
  return (
    <div className="min-w-0 flex-1 overflow-hidden border-y border-l border-[#bcb9b2] bg-white pt-px">
      <svg viewBox="315 243 1221 504" className="block h-[504px] w-[1221px]">
        <polygon
          fill="#05cfa0"
          fillRule="evenodd"
          points="933,249 1000,225 1100,215 1202,243 1245,266 1292,313 1310,367 1298,423 1256,471 1211,496 1204,499 1198,504 1191,508 1186,513 1181,519 1175,525 1170,532 1157,552 1133,593 1012,750 945,750 873,750 1022,561 1042,524 993,515 937,498 876,456 843,402 843,344 875,290 933,249 1044,302 1007,314 980,334 964,359 965,387 980,412 1009,432 1044,443 1087,449 1133,434 1160,419 1180,396 1186,370 1178,344 1156,322 1123,306 1084,299 1044,302"
        />
        <polygon
          points="1044,443 1073,448 1090,448 1108,445 1133,434 1172,465 1211,496 1198,504 1186,513 1175,525 1170,532 1157,552 1099,538 1042,524 993,515 1018,479"
          fill="#18e88c"
        />
        <polygon points="1095,468 1130,485 1060,490" fill="#22dc8c" />
        <polygon points="1062,492 1105,505 1100,530 1042,522" fill="#22dc8c" />
        <polygon points="1135,487 1155,500 1163,525 1102,530 1120,495" fill="#22dc8c" />
        <Line p={pts(Y_OUTER_L)} />
        <Line p={pts(Y_OUTER_R)} />
        <Line p={pts(MID_R)} />
        <Line p={pts(IN_R)} />
        <Line p={[[1042, 524], [1022, 561], [873, 750]]} />
        <Line p={[[1099, 538], [1077, 577], [945, 750]]} />
        <Line p={[[1157, 552], [1133, 593], [1012, 750]]} />
        {LANES.map((l, i) => (
          <Line key={i} p={l} />
        ))}
        {BIG.map(([x, y], i) => (
          <circle key={i} cx={x} cy={y} r="6.5" fill="#000" />
        ))}
        <Arrow a={[1276, 358]} b={[1198, 268]} />
        <Arrow a={[1215, 364]} b={[1162, 300]} />
        <Arrow a={[1062, 471]} b={[1085, 481]} />
        <Arrow a={[1132, 460]} b={[1113, 464]} />
        <Arrow a={[1131, 463]} b={[1117, 471]} />
        <Arrow a={[1022, 502]} b={[1035, 507]} />
        <Arrow a={[1159, 495]} b={[1132, 503]} />
        <Arrow a={[1175, 491]} b={[1163, 501]} />
        <Sign x={1153} y={438} fill="#a6e8d2" base="#6f7b6a" mark="#1f5c4a" />
        <Sign x={1007} y={485} fill="#a6e0dc" base="#6f7b6a" mark="#1f5c4a" />
        <Sign x={1128} y={533} fill="#b7d3f2" base="#8b3a74" mark="#162a4a" />
        <Tree x={501} y={331} h={43} />
        <Tree x={911} y={507} h={45} />
        <Tree x={926} y={621} h={44} />
        <path d="M919 522c-3 2-3 8-1 11v42l-1 5h4l-1-5v-42c2-3 2-9-1-11z" fill="#000" />
      </svg>
    </div>
  );
}

function Field({ children, className }: { children: ReactNode; className: string }) {
  return <div className={`flex h-[26px] items-center rounded-[3px] border border-[#b5b2ab] bg-white ${className}`}>{children}</div>;
}

function Spin() {
  return (
    <div className="flex h-full w-[20px] flex-col items-center justify-center border-l border-[#d5d3cd] text-[#55544f]">
      <ChevronUp size={11} strokeWidth={3} />
      <ChevronDown size={11} strokeWidth={3} />
    </div>
  );
}

function StatusBar() {
  return (
    <div className="flex h-[35px] items-center whitespace-nowrap bg-[#efedea] text-[14.5px] leading-none text-[#2c2c2a]">
      <div className="ml-[4px] flex h-[29px] w-[327px] items-center rounded-[3px] border border-[#c2bfb8] bg-white pl-[8px] text-[17.5px] text-[#8a8985]">
        <Search size={14} className="mr-[6px] text-[#999]" />
        Type to locate (Ctrl+K)
      </div>
      <span className="ml-[138px] w-[76px] text-right">Coordinate</span>
      <Field className="ml-[4px] w-[163px] justify-center text-[14.5px]">8.4427478,49.0225923</Field>
      <svg viewBox="0 0 22 22" className="ml-[3px] h-[22px] w-[22px] shrink-0">
        <path d="M4 4l12 15" stroke="#222" strokeWidth="6" strokeLinecap="round" />
        <ellipse cx="13" cy="14" rx="4.5" ry="5.5" fill="#fff" stroke="#222" strokeWidth="1.5" />
        <circle cx="14" cy="14" r="1.8" fill="#222" />
        <path d="M15 3l1-2M18 5l2-1" stroke="#222" />
      </svg>
      <span className="ml-[13px] w-[35px]">Scale</span>
      <Field className="ml-[4px] w-[116px] pl-[4px]">
        <span className="flex-1">1:161</span>
        <div className="flex h-full w-[20px] items-center justify-center border-l border-[#d5d3cd]">
          <Dd />
        </div>
      </Field>
      <svg viewBox="0 0 18 24" className="ml-[12px] h-[23px] w-[18px] shrink-0">
        <path d="M4.5 11V7c0-5 9-5 9 0v4" fill="none" stroke="#8a8985" strokeWidth="1.8" />
        <rect x="2" y="11" width="14" height="11" rx="1.5" fill="#6b6a65" />
      </svg>
      <span className="ml-[6px] w-[66px]">Magnifier</span>
      <Field className="ml-[4px] w-[104px] pl-[4px]">
        <span className="flex-1">100%</span>
        <Spin />
      </Field>
      <span className="ml-[10px] w-[60px]">Rotation</span>
      <Field className="ml-[6px] w-[105px] pl-[4px]">
        <span className="flex-1">0.0 °</span>
        <Spin />
      </Field>
      <span className="ml-[6px] flex h-[17px] w-[17px] shrink-0 items-center justify-center border border-[#a9a7a0] bg-white">
        <svg viewBox="0 0 12 12" className="h-[13px] w-[13px]">
          <path d="M2 6.5l3 4 5-9" fill="none" stroke="#111" strokeWidth="1.8" />
        </svg>
      </span>
      <span className="ml-[6px] w-[50px]">Render</span>
      <svg viewBox="0 0 20 20" className="ml-[18px] h-[20px] w-[20px] shrink-0" fill="none" stroke="#55544f">
        <circle cx="10" cy="10" r="8" />
        <ellipse cx="10" cy="10" rx="4" ry="8" />
        <path d="M2 7h16M2 13h16M10 2v16" />
      </svg>
      <span className="ml-[4px] w-[74px]">EPSG:4326</span>
      <svg viewBox="0 0 24 24" className="ml-[18px] h-[24px] w-[24px] shrink-0">
        <path d="M12 2c6 0 10 4 10 9 0 5-4 9-9 9-1 1-3 2-5 2 1-1 1-2 1-3-4-1-7-4-7-8 0-5 4-9 10-9z" fill="#5a5954" />
        <circle cx="7.5" cy="11" r="1.5" fill="#fff" />
        <circle cx="12" cy="11" r="1.5" fill="#fff" />
        <circle cx="16.5" cy="11" r="1.5" fill="#fff" />
      </svg>
    </div>
  );
}

function Taskbar() {
  return (
    <div className="flex h-[28px] items-center overflow-hidden whitespace-nowrap bg-[#3c3b37] text-[17.5px] leading-none text-[#d8d6cf]">
      <div className="flex h-full w-[15px] shrink-0 flex-col justify-center">
        <div className="h-[22px] border-t-2 border-[#d8e2c8] bg-[#7aa04a]">
          <i className="ml-[2px] mt-[3px] block h-[3px] w-[3px] bg-white" />
          <i className="ml-[2px] mt-[3px] block h-[3px] w-[3px] bg-white" />
        </div>
      </div>
      <i className="ml-[4px] h-[18px] w-[3px] shrink-0 bg-[#55544f]" />
      <TermIcon className="ml-[15px]" />
      <span className="ml-[8px] w-[187px] shrink-0">shreyade@kadasd...</span>
      <svg viewBox="0 0 16 16" className="ml-[1px] h-[16px] w-[16px] shrink-0">
        <circle cx="8" cy="8" r="6.5" fill="#2c2255" />
        <path d="M2 6h12v1.5H2zM2 9h12v1.5H2z" fill="#fff" />
        <path d="M8 1.5A6.5 6.5 0 0 0 8 14.5" fill="none" stroke="#f7941e" strokeWidth="1" />
      </svg>
      <span className="ml-[6px] w-[187px] shrink-0">eclipse - map/tools...</span>
      <svg viewBox="0 0 16 18" className="h-[18px] w-[16px] shrink-0">
        <rect x="1" y="2" width="12" height="15" fill="#e9e8e4" stroke="#8a8985" />
        <path d="M3 6h8M3 9h8M3 12h6" stroke="#777" />
        <path d="M8 11l7-9 1 1-7 9z" fill="#55544f" />
      </svg>
      <span className="ml-[9px] w-[187px] shrink-0">*ad_map_access_q...</span>
      <Firefox size="h-[17px] w-[17px]" />
      <span className="ml-[7px] w-[186px] shrink-0">Qgis - ad_map_acc...</span>
      <svg viewBox="0 0 16 16" className="h-[16px] w-[16px] shrink-0">
        <path d="M1 3h5l2 2h7v10H1z" fill="#6e7f4e" />
      </svg>
      <span className="ml-[8px] w-[183px] shrink-0">[images]</span>
      <div className="flex h-full w-[209px] shrink-0 items-center gap-[8px] bg-[#302f2c] pl-[6px]">
        <QIcon />
        <span>*Untitled Project ...</span>
      </div>
      <div className="ml-px flex h-full w-[54px] shrink-0 items-center justify-center border border-[#e8e8e0] bg-[#a2bb78]">
        <QIcon />
      </div>
      <div className="flex h-full w-[53px] shrink-0 items-center justify-center border border-[#e8e8e0] bg-[#2a2a28]">
        <TermIcon />
      </div>
      <svg viewBox="0 0 16 24" className="ml-[110px] h-[24px] w-[16px] shrink-0">
        <rect x="1" y="2" width="14" height="3" fill="#8c8b86" />
        <path d="M2 5h12l-1 18H3z" fill="#77766f" />
        <path d="M5 8v12M8 8v12M11 8v12" stroke="#9a9994" />
      </svg>
    </div>
  );
}

export default function App() {
  return (
    <div className={`flex h-[811px] w-[1536px] flex-col overflow-hidden ${FONT}`}>
      {/* desktop panel */}
      <div className="flex h-[44px] items-center border-b border-[#5a5954] bg-[#3c3b37] pb-[2px] text-[18px] leading-none text-[#dcdad3]">
        <svg viewBox="0 0 26 26" className="ml-[8px] h-[26px] w-[26px]">
          <circle cx="13" cy="13" r="13" fill="#d6d3cb" />
          <circle cx="13" cy="13" r="7" fill="none" stroke="#55544f" strokeWidth="2" />
          <circle cx="5" cy="13" r="2.5" fill="#55544f" />
          <circle cx="17" cy="6" r="2.5" fill="#55544f" />
          <circle cx="17" cy="20" r="2.5" fill="#55544f" />
        </svg>
        <span className="ml-[7px]">Menu</span>
        <span className="ml-[15px]">
          <Firefox size="h-[31px] w-[31px]" />
        </span>
        <svg viewBox="0 0 22 22" className="ml-[161px] h-[20px] w-[20px]" fill="none" stroke="#b5b3ac" strokeWidth="1.6">
          <path d="M4 5a9 9 0 1 1 0 12" />
          <circle cx="11" cy="11" r="4" />
          <path d="M1 7l6 4-6 4z" fill="#b5b3ac" stroke="none" />
        </svg>
        <span className="ml-[7px]">Menu</span>
        <div className="flex-1" />
        <div className="mr-[14px] flex flex-col gap-[3px]">
          <i className="h-[4px] w-[4px] bg-[#5a5954]" />
          <i className="h-[4px] w-[4px] bg-[#5a5954]" />
          <i className="h-[4px] w-[4px] bg-[#5a5954]" />
        </div>
        <svg viewBox="0 0 20 18" className="mr-[18px] h-[18px] w-[20px]">
          <path d="M10 1L19 17H1z" fill="none" stroke="#ee1c1c" strokeWidth="1.4" />
          <path d="M10 6v6M10 13.5v2" stroke="#ee1c1c" strokeWidth="1.6" />
        </svg>
        <svg viewBox="0 0 18 18" className="mr-[17px] h-[18px] w-[18px]" fill="#e8e6df">
          <path d="M5 1l4.500 5H6.500v7h-3V6H.5z" />
          <path d="M13 17l4.500-5h-3V5h-3v7h-3z" />
        </svg>
        <svg viewBox="0 0 20 16" className="mr-[18px] h-[16px] w-[20px]" fill="none">
          <path d="M1 5h3l5-4v14l-5-4H1z" fill="#e8e6df" />
          <path d="M11 5c1 2 1 4 0 6M14 3c2 3 2 7 0 10" stroke="#e8e6df" strokeWidth="1.3" />
          <path d="M17 1c3 4 3 10 0 14" stroke="#8a8985" strokeWidth="1.3" />
        </svg>
        <svg viewBox="0 0 18 18" className="mr-[10px] h-[18px] w-[18px]" fill="none" stroke="#e8e6df" strokeWidth="2.4">
          <circle cx="9" cy="10" r="6" />
          <path d="M9 1v6" />
          <path d="M2 3l2 2M16 3l-2 2M2 16l2-2M16 16l-2-2" strokeWidth="1.8" />
        </svg>
        <span className="mr-[2px] w-[149px] whitespace-nowrap text-[17px]">Wed Oct 21, 00:06</span>
      </div>

      {/* window title */}
      <div className="flex h-[31px] items-center bg-gradient-to-b from-[#45443f] to-[#3c3b37] pb-[3px] text-[18px] leading-none text-[#d4d2ca]">
        <i className="ml-[15px] h-[9px] w-[9px] rounded-full bg-[#c8c6be] shadow-[0_-2px_2px_#222]" />
        <span className="ml-[16px] font-medium">*Untitled Project — QGIS</span>
        <div className="flex-1" />
        <div className="mr-[11px] flex gap-[3px]">
          <span className="flex h-[15px] w-[15px] items-center justify-center rounded-full bg-[#6b6a65]">
            <i className="h-px w-[7px] bg-[#2c2c2a]" />
          </span>
          <span className="flex h-[15px] w-[15px] items-center justify-center rounded-full bg-[#6b6a65]">
            <i className="h-[5px] w-[7px] border border-[#2c2c2a]" />
          </span>
          <span className="flex h-[15px] w-[15px] items-center justify-center rounded-full bg-[#e2562a] text-[11px] text-[#3c2016]">×</span>
        </div>
      </div>

      {/* menu */}
      <div className="flex h-[25px] items-center border-b border-[#dcd9d3] bg-[#f0eeea] pl-[12px] pt-[1px] text-[17.5px] leading-none text-[#1f1f1d]">
        {([
          ["Pro", "j", "ect", "w-[73px]"],
          ["", "E", "dit", "w-[48px]"],
          ["", "V", "iew", "w-[56px]"],
          ["", "L", "ayer", "w-[60px]"],
          ["", "S", "ettings", "w-[83px]"],
          ["", "P", "lugins", "w-[75px]"],
          ["Vect", "o", "r", "w-[69px]"],
          ["", "R", "aster", "w-[68px]"],
          ["", "D", "atabase", "w-[92px]"],
          ["", "W", "eb", "w-[52px]"],
          ["", "M", "esh", "w-[60px]"],
          ["Pro", "c", "essing", "w-[104px]"],
          ["", "H", "elp", "w-[40px]"],
        ] as const).map(([a, u, b, w]) => (
          <span key={a + u + b} className={`${w} whitespace-nowrap`}>
            {a}
            <span className="underline decoration-[2px] underline-offset-[3px]">{u}</span>
            {b}
          </span>
        ))}
      </div>

      <Row1 />
      <Row2 />
      <Row3 />

      <div className="flex min-h-0 flex-1">
        <LayersPanel />
        <div className="flex w-[7px] shrink-0 items-center justify-center bg-[#efedea]">
          <div className="flex flex-col gap-[2px]">
            {[0, 1, 2, 3].map((i) => (
              <i key={i} className="h-px w-px bg-[#a5a39d]" />
            ))}
          </div>
        </div>
        <MapCanvas />
      </div>

      <StatusBar />
      <Taskbar />
    </div>
  );
}
